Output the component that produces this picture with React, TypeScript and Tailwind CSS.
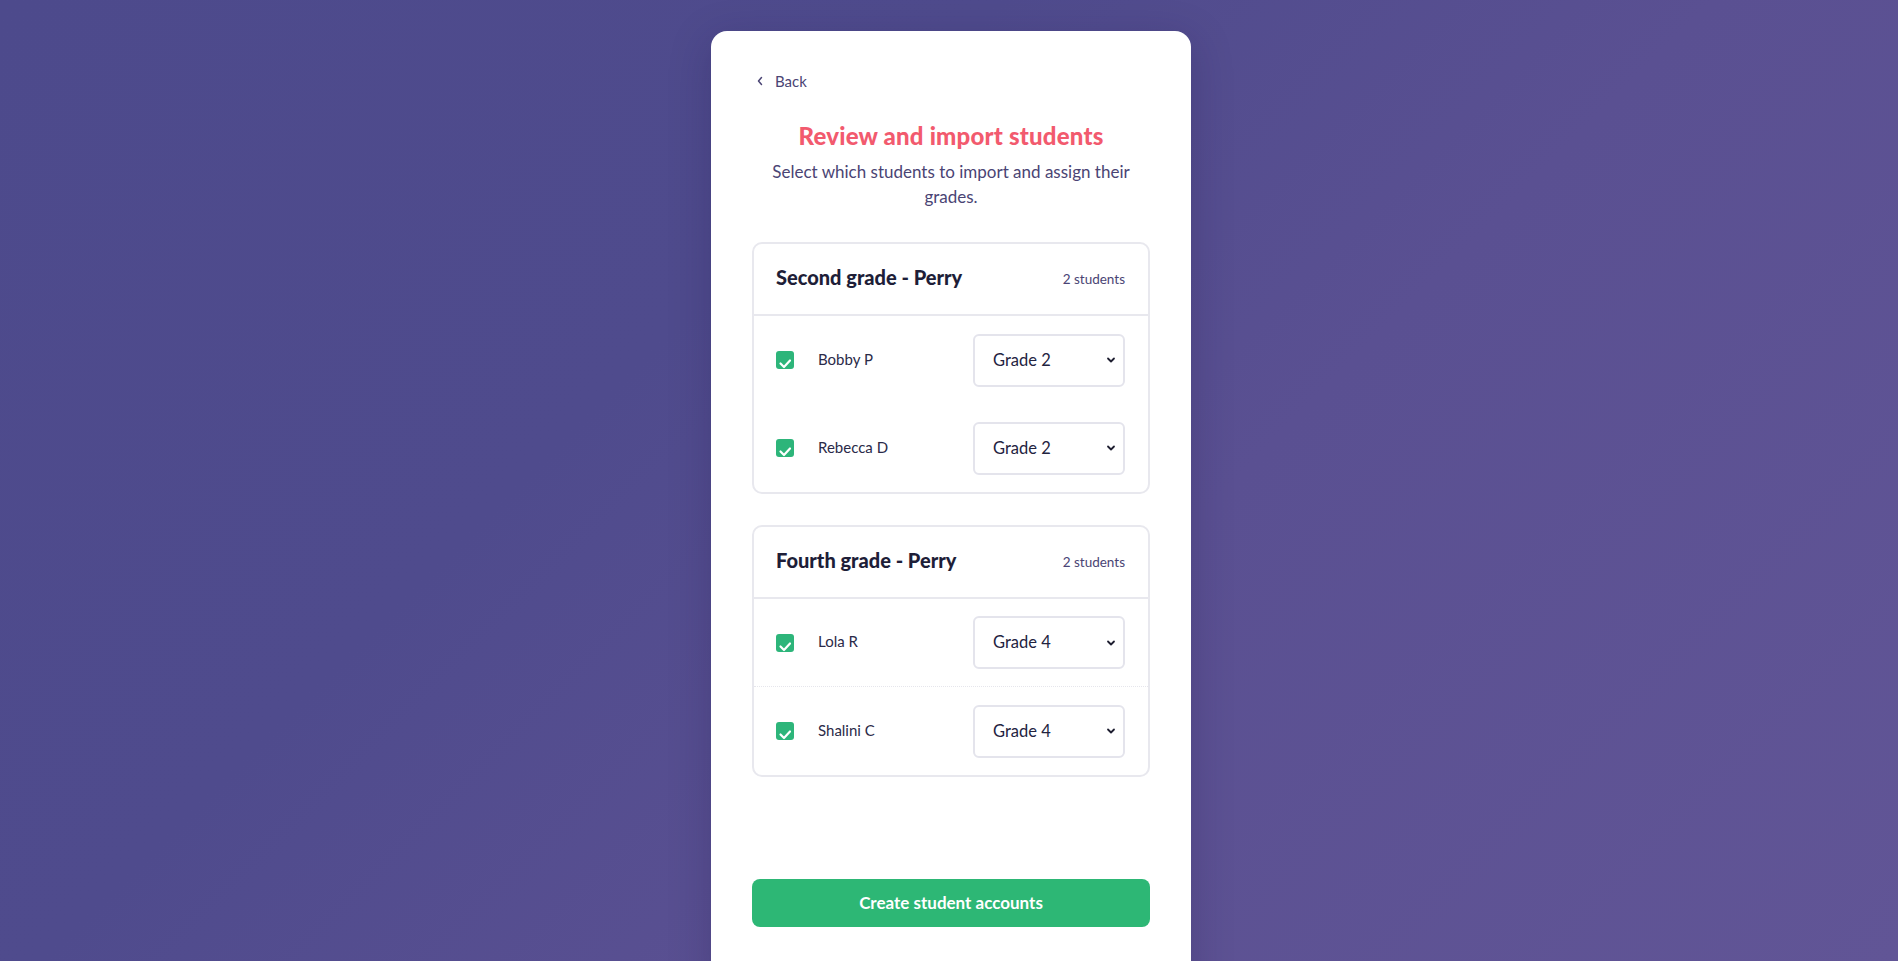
import React from "react";

const groups = [
  { title: "Second grade - Perry", students: [{ name: "Bobby P", grade: "Grade 2" }, { name: "Rebecca D", grade: "Grade 2" }], divider: false },
  { title: "Fourth grade - Perry", students: [{ name: "Lola R", grade: "Grade 4" }, { name: "Shalini C", grade: "Grade 4" }], divider: true },
];

function Check() {
  return (
    <div className="w-[18px] h-[18px] rounded-[3px] bg-[#2db57a] flex items-end justify-center shrink-0">
      <svg width="14" height="12" viewBox="0 0 14 12" fill="none">
        <path d="M2.5 6.5 L6 10 L12 3.5" stroke="white" strokeWidth="2.2" strokeLinecap="round" strokeLinejoin="round" />
      </svg>
    </div>
  );
}

function Select({ value }: { value: string }) {
  return (
    <div className="w-[152px] h-[53px] rounded-[6px] border-2 border-[#e4e4ec] bg-white flex items-center justify-between pl-[18px] pr-[7px]">
      <span className="text-[16.5px] text-[#23233f]">{value}</span>
      <svg width="10" height="8" viewBox="0 0 10 8" fill="none">
        <path d="M2 2.5 L5 5.5 L8 2.5" stroke="#1e1e30" strokeWidth="1.8" strokeLinecap="round" strokeLinejoin="round" />
      </svg>
    </div>
  );
}

export default function App() {
  return (
    <div
      className="w-[1898px] h-[961px] overflow-hidden flex justify-center pl-[4px] bg-[linear-gradient(135deg,#4d4a8c_0%,#4f4b8d_35%,#5a5092_60%,#615596_100%)]"
      style={{ fontFamily: "Lato, 'Noto Sans', sans-serif" }}
    >
      <div className="mt-[31px] w-[480px] h-[960px] bg-white rounded-t-[16px] px-[41px] pt-[39px] flex flex-col shadow-[0_10px_40px_rgba(30,20,70,0.25)]">
        <div className="flex items-center gap-[11px] h-[22px] text-[#4a4474] text-[15px]">
          <svg width="8" height="10" viewBox="0 0 8 10" fill="none" className="ml-[4px]">
            <path d="M5.5 1.5 L2.5 5 L5.5 8.5" stroke="#4a4474" strokeWidth="1.5" strokeLinecap="round" strokeLinejoin="round" />
          </svg>
          <span>Back</span>
        </div>
        <h1 className="mt-[29px] text-center text-[24px] leading-[30px] font-black text-[#f25a6e] tracking-[0.2px]">
          Review and import students
        </h1>
        <p className="mt-[8px] text-center text-[17px] leading-[25px] text-[#4a4474] px-[16px]">
          Select which students to import and assign their grades.
        </p>
        <div className="mt-[33px] flex flex-col gap-[31px]">
          {groups.map((g) => (
            <div key={g.title} className="border-2 border-[#e8e8ee] rounded-[10px]">
              <div className="h-[72px] border-b-2 border-[#e8e8ee] flex items-center justify-between pl-[22px] pr-[23px]">
                <span className="text-[20px] font-black text-[#1e1e38] -mt-[4px]">{g.title}</span>
                <span className="text-[13.5px] text-[#4a4474]">{g.students.length} students</span>
              </div>
              {g.students.map((s, i) => (
                <div
                  key={s.name}
                  className={
                    "h-[88px] flex items-center pl-[22px] pr-[23px] " +
                    (g.divider && i === 0 ? "border-b border-dotted border-[#e6e6ec]" : "")
                  }
                >
                  <Check />
                  <span className="ml-[24px] text-[15px] text-[#2a2a48] flex-1 -mt-[2px]">{s.name}</span>
                  <Select value={s.grade} />
                </div>
              ))}
            </div>
          ))}
        </div>
        <button className="mt-[102px] h-[48px] w-full rounded-[8px] bg-[#2db775] text-white text-[17px] font-bold">
          Create student accounts
        </button>
      </div>
    </div>
  );
}
